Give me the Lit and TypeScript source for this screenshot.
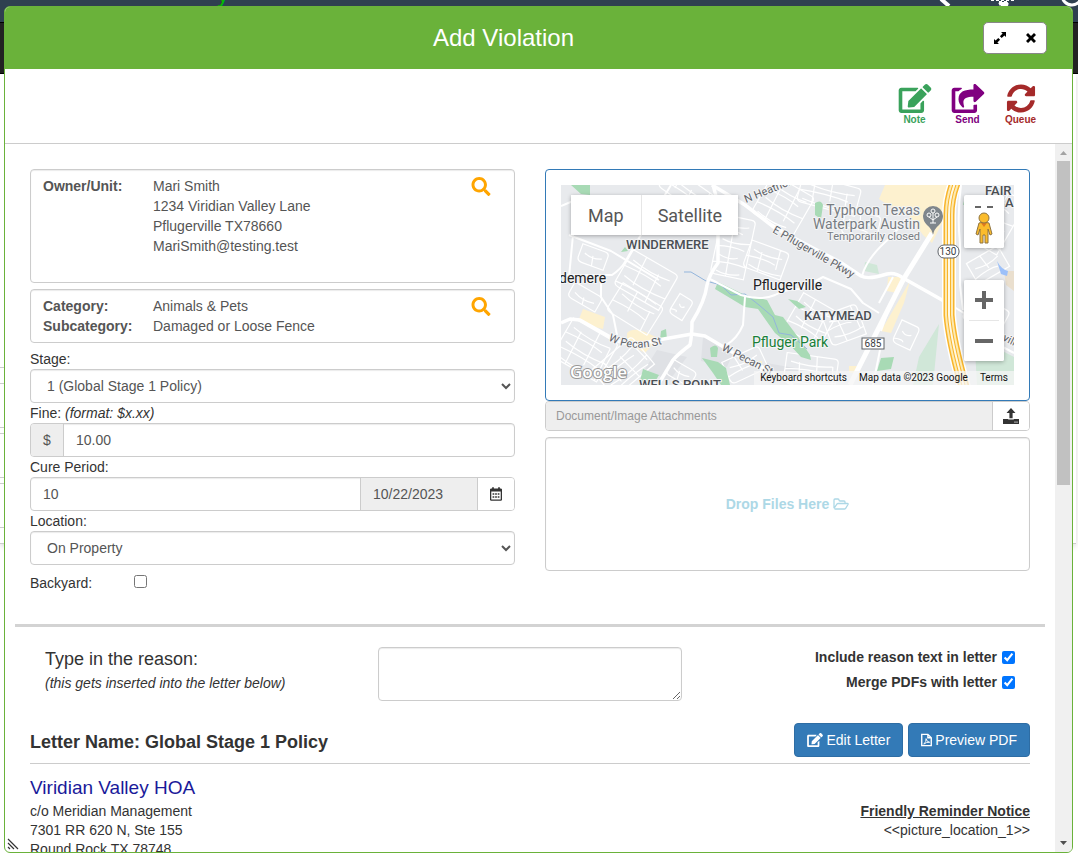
import { LitElement, html, svg, css } from "lit";
import { customElement } from "lit/decorators.js";

const ICONS: Record<string, { box: string; d: string }> = {
  edit: {
    box: "0 0 576 512",
    d: "M402.6 83.2l90.2 90.2c3.8 3.8 3.8 10 0 13.8L274.4 405.6l-92.8 10.3c-12.4 1.4-22.9-9.1-21.5-21.5l10.3-92.8L388.800 83.2c3.800-3.800 10-3.800 13.800 0zm162-22.900l-48.800-48.800c-15.200-15.200-39.900-15.200-55.200 0l-35.400 35.400c-3.800 3.800-3.800 10 0 13.800l90.200 90.200c3.800 3.800 10 3.800 13.800 0l35.400-35.400c15.200-15.300 15.200-40 0-55.200zM384 346.200V448H64V128h229.800c3.200 0 6.200-1.300 8.500-3.500l40-40c7.600-7.600 2.200-20.500-8.500-20.500H48C21.500 64 0 85.500 0 112v352c0 26.500 21.500 48 48 48h352c26.500 0 48-21.500 48-48V306.200c0-10.700-12.900-16-20.500-8.500l-40 40c-2.200 2.300-3.500 5.300-3.500 8.500z",
  },
  share: {
    box: "0 0 576 512",
    d: "M568.482 177.448L424.479 313.433C409.300 327.768 384 317.140 384 295.985v-71.963c-144.575.970-205.566 35.113-164.775 171.353 4.483 14.973-12.846 26.567-25.006 17.330C155.252 383.105 120 326.488 120 269.339c0-143.937 117.599-172.500 264-173.312V24.012c0-21.174 25.317-31.768 40.479-17.448l144.003 135.988c10.020 9.463 10.028 25.425 0 34.896zM384 379.128V448H64V128h50.916a11.990 11.990 0 0 0 8.648-3.693c14.953-15.568 32.237-27.890 51.014-37.676C185.708 80.830 181.584 64 169.033 64H48C21.490 64 0 85.490 0 112v352c0 26.510 21.490 48 48 48h352c26.510 0 48-21.490 48-48v-88.806c0-8.288-8.197-14.066-16.011-11.302a71.830 71.830 0 0 1-34.189 3.377c-7.270-1.046-13.800 4.514-13.800 11.859z",
  },
  sync: {
    box: "0 0 512 512",
    d: "M370.720 133.280C339.458 104.008 298.888 87.962 255.848 88c-77.458.068-144.328 53.178-162.791 126.850-1.344 5.363-6.122 9.150-11.651 9.150H24.103c-7.498 0-13.194-6.807-11.807-14.176C33.933 94.924 134.813 8 256 8c66.448 0 126.791 26.136 171.315 68.685L463.030 40.970C478.149 25.851 504 36.559 504 57.941V192c0 13.255-10.745 24-24 24H345.941c-21.382 0-32.090-25.851-16.971-40.971l41.750-41.749zM32 296h134.059c21.382 0 32.090 25.851 16.971 40.971l-41.750 41.750c31.262 29.273 71.835 45.319 114.876 45.280 77.418-.070 144.315-53.144 162.787-126.849 1.344-5.363 6.122-9.150 11.651-9.150h57.304c7.498 0 13.194 6.807 11.807 14.176C478.067 417.076 377.187 504 256 504c-66.448 0-126.791-26.136-171.315-68.685L48.970 471.030C33.851 486.149 8 475.441 8 454.059V320c0-13.255 10.745-24 24-24z",
  },
  search: {
    box: "0 0 512 512",
    d: "M505 442.700L405.300 343c-4.500-4.500-10.600-7-17-7H372c27.600-35.300 44-79.700 44-128C416 93.100 322.900 0 208 0S0 93.100 0 208s93.100 208 208 208c48.300 0 92.700-16.400 128-44v16.300c0 6.400 2.500 12.500 7 17l99.700 99.700c9.400 9.400 24.600 9.400 33.900 0l28.300-28.300c9.400-9.400 9.400-24.600.100-34zM208 336c-70.700 0-128-57.200-128-128 0-70.700 57.200-128 128-128 70.700 0 128 57.200 128 128 0 70.700-57.200 128-128 128z",
  },
  expand: {
    box: "0 0 14 14",
    d: "M8 1h5v5l-1.600-1.600-2.700 2.700-1.800-1.800 2.700-2.700zM6 13H1V8l1.600 1.600 2.700-2.700 1.800 1.800-2.700 2.700z",
  },
  close: {
    box: "0 0 12 12",
    d: "M3 1L6 4 9 1 11 3 8 6 11 9 9 11 6 8 3 11 1 9 4 6 1 3z",
  },
  upload: {
    box: "0 0 16 16",
    d: "M8 0l4.500 5H9.600v5.200H6.400V5H3.500zM0 11h5.200v.6h5.600V11H16v5H0zm11.500 2.600v1.200h1V13.600zm2 0v1.200h1V13.600z",
  },
  calendar: {
    box: "0 0 14 16",
    d: "M2.500 0h2v1.500h5V0h2v1.500H13l1 1V15l-1 1H1l-1-1V2.500l1-1h1.500zM1.500 5v9.500h11V5zM3 7h2v2H3zM6 7h2v2H6zM9 7h2v2H9zM3 10.500h2v2H3zM6 10.500h2v2H6zM9 10.500h2v2H9z",
  },
};

const icon = (name: string, cls: string) => html`
  <svg class=${cls} viewBox=${ICONS[name].box} aria-hidden="true"><path fill="currentColor" fill-rule="evenodd" d=${ICONS[name].d}></path></svg>
`;

// Residential street blocks: centre x, centre y, half width, half height, rotation, spacing.
const BLOCKS: number[][] = [
  [128, 8, 30, 12, 35, 8], [172, 62, 17, 30, 12, 8], [85, 95, 26, 20, 30, 9],
  [32, 72, 14, 9, 20, 8], [74, 124, 24, 16, 32, 10], [120, 122, 8, 11, 32, 9], [24, 165, 26, 22, 30, 8], [62, 182, 26, 18, -40, 8],
  [120, 188, 14, 8, 30, 7], [222, 20, 24, 22, 30, 8], [268, 10, 30, 14, 15, 8], [205, 75, 20, 14, 20, 8],
  [184, 180, 20, 12, -25, 8], [250, 135, 20, 20, 30, 8], [283, 140, 18, 16, -20, 8], [300, 40, 18, 12, 12, 9],
  [250, 185, 26, 14, 8, 8], [435, 35, 18, 30, 30, 9], [427, 80, 18, 12, -30, 9],
  [345, 150, 10, 12, 25, 10], [425, 130, 20, 14, 28, 10], [24, 112, 16, 8, 30, 9],
];

const blockPath = ([, , w, h, , s]: number[]) => {
  let d = `M${-w} ${-h}H${w - 4}Q${w} ${-h} ${w} ${-h + 4}V${h}H${-w + 5}Q${-w} ${h} ${-w} ${h - 5}Z`;
  let i = 0;
  for (let y = -h + s; y < h - 3; y += s) {
    i++;
    d += `M${-w + (i % 2) * 5} ${y}Q0 ${y + (i % 2 ? 4 : -3)} ${w - (i % 3) * 5} ${y}`;
  }
  for (let x = -w + s * 1.7; x < w - 4; x += s * 2.1) {
    i++;
    d += `M${x} ${i % 2 ? -h : -h + s}L${x + 2} ${i % 2 ? h - s : h}`;
  }
  return d;
};

const MAIN_ROADS = [
  "M151 0L184 20L214 43Q250 62 279 77L300 91Q307 95 326 89Q334 87 342 93L390 120",
  "M0 138L9 134L19 135L51 153Q66 163 97 155L131 149L144 151L171 167L211 187L232 200",
  "M152 0Q159 22 157 50V78Q148 90 146 100Q144 116 131 137Q131 150 129 160Q116 170 112 175L97 200",
];
const SIDE_ROADS = [
  "M0 90L51 90Q60 84 64 77L81 48L110 0",
  "M0 21L12 16M8 50L50 66L98 95",
  "M147 93L180 110Q200 116 214 110Q224 104 240 104L262 92L290 104L302 118L318 128",
  "M184 112L182 140Q176 154 165 160",
  "M40 90L40 112L52 130L56 150M12 50L8 92",
  "M301 91Q306 72 330 52L345 34M318 118L332 92",
  "M390 120L406 130L410 145L453 168M400 0Q396 30 399 58V100L402 125",
];
const TOLL_ROAD = "M394 -2Q388 14 388 30V130Q390 156 403 202";

@customElement("map-view")
export class MapView extends LitElement {
  static styles = css`
    :host { display: block; position: relative; height: 200px; overflow: hidden; background: #e8eaed; font-family: Roboto, sans-serif; }
    .canvas { display: block; width: 100%; height: 100%; }
    .road-label { font-size: 11px; fill: #5f6368; }
    .area { font-size: 13px; font-weight: 500; fill: #4b4f54; }
    .town { font-size: 14px; fill: #202124; }
    .park { font-size: 14px; fill: #188038; }
    .poi { font-size: 14px; fill: #777c82; text-anchor: end; }
    .poi-note { font-size: 11px; fill: #777c82; text-anchor: end; }
    .route { font-size: 10px; fill: #3c4043; text-anchor: middle; }
    .halo { paint-order: stroke; stroke: #f4f5f6; stroke-width: 2px; stroke-linejoin: round; }
    .logo { font-family: "Open Sans", sans-serif; font-size: 17px; font-weight: 600; fill: #fff; stroke: #999; stroke-width: 2px; paint-order: stroke; }
    .types { position: absolute; left: 10px; top: 10px; display: flex; box-shadow: 0 1px 4px rgba(0, 0, 0, 0.3); }
    button { border: 0; margin: 0; padding: 0; background: #fff; color: #565656; font-family: inherit; }
    .type { height: 40px; padding: 0 17px; font-size: 18px; }
    .type + .type { border-left: 1px solid #e6e6e6; padding: 0 16px; }
    .tools { position: absolute; right: 10px; top: 10px; width: 40px; display: flex; flex-direction: column; gap: 32px; }
    .stack { display: flex; flex-direction: column; border-radius: 2px; background: #fff; box-shadow: 0 1px 4px rgba(0, 0, 0, 0.3); overflow: hidden; }
    .tilt { height: 13px; display: flex; align-items: flex-end; justify-content: center; gap: 6px; }
    .dash { width: 6px; height: 2px; background: #666; }
    .tool { height: 40px; display: flex; align-items: center; justify-content: center; }
    .rule { height: 1px; margin: 0 5px; background: #e6e6e6; }
    .pegman { width: 18px; height: 32px; }
    .glyph { width: 18px; height: 18px; }
    .credits { position: absolute; right: 0; bottom: 0; height: 14px; display: flex; align-items: center; }
    .credit { background: rgba(245, 245, 245, 0.75); padding: 0 6px; line-height: 14px; color: #111; text-decoration: none; font-size: 10px; }
  `;

  render() {
    return html`
      <svg class="canvas" viewBox="0 0 453 200" preserveAspectRatio="xMidYMid slice" role="img" aria-label="Map of Pflugerville">
        <g fill="#dfe1e5">
          <path d="M142 152L172 168L166 182L140 176zM96 165L126 172L108 196L84 184zM205 178L240 184L230 200H200z"></path>
        </g>
        <g fill="#fdf1cf">
          <path d="M324 0H390L382 36L371 58L362 50L346 28L330 22L318 14zM22 124L44 132L42 144L34 142L18 134zM66 148Q72 142 84 147L97 153L84 168L66 158zM327 92L340 92L336 108L326 106zM349 96L343 118L330 148L320 146zM288 181H296V188H288zM194 176H201V182H194z"></path>
        </g>
        <g fill="none" stroke="#fff" stroke-width="1.200">
          ${BLOCKS.map((b) => svg`<path transform="translate(${b[0]} ${b[1]}) rotate(${b[4]})" d=${blockPath(b)}></path>`)}
        </g>
        <g fill="#a8dab5">
          <path d="M10 0H29V10L20 9zM60 67L64 62L67 66zM157 97L184 110L206 115L214 130L222 132L237 152L249 170L250 175L240 172L229 160L214 148L197 124L184 122L154 104zM100 146L105 144L106 154H99zM149 163Q155 158 157 163L156 172L150 172zM141 173L157 177L165 183L169 200H160L152 188zM82 184L98 190L92 200H78zM254 18Q260 14 262 20L260 34L254 30zM320 173L333 172L330 184L316 186zM227 114L236 116L245 122L238 124zM404 12L410 18L402 20z"></path>
        </g>
        <g fill="#d0e7d8">
          <path d="M378 139L372 200H352L358 172zM414 165L426 158L453 172V200H416zM304 77L316 80L318 89L303 86z"></path>
        </g>
        <path d="M443 86H453V106L445 100z" fill="#eadfce"></path>
        <path d="M436 76Q440 84 447 86L446 91L440 89z" fill="#9cc0f9"></path>
        <path d="M123 87L130 87L145 96L160 100L170 110L184 109L198 120L212 132L218 148L230 150L246 164" fill="none" stroke="#93b5dc" stroke-width="1"></path>
        <g fill="none" stroke="#fff" stroke-width="2" stroke-linejoin="round">
          ${SIDE_ROADS.map((d) => svg`<path d=${d}></path>`)}
        </g>
        <g fill="none" stroke="#fff" stroke-width="3.500" stroke-linejoin="round">
          ${MAIN_ROADS.map((d) => svg`<path d=${d}></path>`)}
        </g>
        <path d="M371 48L342 95L289 200" fill="none" stroke="#fff" stroke-width="5"></path>
        <path d="M330 118L320 146M319 165L312 200" fill="none" stroke="#fff" stroke-width="2"></path>
        <g fill="none">
          <path d=${TOLL_ROAD} stroke="#fff" stroke-width="14"></path>
          <path d=${TOLL_ROAD} stroke="#f8b52c" stroke-width="11"></path>
          <path d=${TOLL_ROAD} stroke="#fdeab2" stroke-width="8"></path>
          <path d=${TOLL_ROAD} stroke="#f8b52c" stroke-width="4"></path>
          <path d=${TOLL_ROAD} stroke="#fff8e2" stroke-width="2"></path>
        </g>
        <path id="pecan" d="M47 155Q70 168 102 159" fill="none"></path>

        <text class="area halo" x="65" y="64">WINDERMERE</text>
        <text class="town halo" x="-2" y="98">demere</text>
        <text class="town halo" x="192" y="105">Pflugerville</text>
        <text class="area halo" x="243" y="135">KATYMEAD</text>
        <text class="park halo" x="191" y="162">Pfluger Park</text>
        <text class="area halo" x="78" y="204">WELLS POINT</text>
        <text class="area halo" x="424" y="10">FAIR</text>
        <text class="area halo" x="444" y="22">A</text>
        <text class="poi halo" x="359" y="30">Typhoon Texas</text>
        <text class="poi halo" x="359" y="44">Waterpark Austin</text>
        <text class="poi-note halo" x="359" y="55">Temporarily closed</text>
        <text class="road-label halo"><textPath href="#pecan">W Pecan St</textPath></text>
        <text class="road-label halo" transform="translate(160 165) rotate(27)">W Pecan St</text>
        <text class="road-label halo" transform="translate(211 47) rotate(30)">E Pflugerville Pkwy</text>
        <text class="road-label halo" transform="translate(185 18) rotate(-22)">N Heather</text>
        <text class="road-label halo" transform="translate(441 155) rotate(27)">ville</text>

        <path d="M372 50Q371 44 366 40Q362 36 362 31A10 10 0 0 1 382 31Q382 36 378 40Q373 44 372 50z" fill="#7f868c"></path>
        <g fill="none" stroke="#fff" stroke-width="1">
          <path d="M372 38V28M369 38H375M372 35L368 32M372 35L376 32"></path>
          <circle cx="372" cy="26" r="2"></circle><circle cx="368" cy="30" r="2"></circle><circle cx="376" cy="30" r="2"></circle>
        </g>
        <rect x="377" y="60" width="21" height="13" rx="6" fill="#fff" stroke="#5f6368"></rect>
        <text class="route" x="387" y="70">130</text>
        <rect x="301" y="153" width="22" height="11" fill="#fff" stroke="#5f6368"></rect>
        <text class="route" x="312" y="162">685</text>
        <text class="logo" x="9" y="193">Google</text>
      </svg>

      <div class="types">
        <button class="type">Map</button>
        <button class="type">Satellite</button>
      </div>
      <div class="tools">
        <div class="stack">
          <div class="tilt"><span class="dash"></span><span class="dash"></span></div>
          <button class="tool" aria-label="Street View">
            <svg class="pegman" viewBox="0 0 18 32" aria-hidden="true">
              <path d="M4 11Q9 9 14 11L17 22L15 23L13 17V31H10V23H8V31H5V17L3 23L1 22z" fill="#fbbc2c" stroke="#8f7440"></path>
              <path d="M6 11H12L9 15z" fill="#e07a1f"></path>
              <circle cx="9" cy="6" r="5" fill="#fbbc2c" stroke="#8f7440"></circle>
            </svg>
          </button>
        </div>
        <div class="stack">
          <button class="tool" aria-label="Zoom in">
            <svg class="glyph" viewBox="0 0 18 18" aria-hidden="true"><path d="M7 0h4v7h7v4h-7v7H7v-7H0V7h7z" fill="#666"></path></svg>
          </button>
          <div class="rule"></div>
          <button class="tool" aria-label="Zoom out">
            <svg class="glyph" viewBox="0 0 18 18" aria-hidden="true"><path d="M0 7h18v4H0z" fill="#666"></path></svg>
          </button>
        </div>
      </div>
      <div class="credits">
        <button class="credit">Keyboard shortcuts</button>
        <span class="credit">Map data ©2023 Google</span>
        <a class="credit" href="#">Terms</a>
      </div>
    `;
  }
}

@customElement("app-root")
export class AppRoot extends LitElement {
  static styles = css`
    :host { display: block; position: relative; height: 100vh; overflow: hidden; background: #fff; font-family: "Liberation Sans", Arial, sans-serif; font-size: 14px; line-height: 20px; color: #333; }
    * { box-sizing: border-box; }
    button, input, select, textarea { font: inherit; color: inherit; margin: 0; }
    button { cursor: pointer; }

    .navbar { height: 23px; background: #2f4050; border-bottom: 1px solid #000; display: flex; justify-content: space-between; overflow: hidden; }
    .brand { margin: -6px 0 0 217px; height: 5px; line-height: 0; font-size: 24px; color: #0b0; }
    .nav-icons { width: 140px; height: 8px; }
    .subnav { height: 51px; background: #222; border-bottom: 1px solid #000; }
    .page-card { display: flex; flex-direction: column; gap: 5px; margin-right: 2px; padding-bottom: 15px; border-bottom: 1px solid #ccc; box-shadow: 0 2px 6px rgba(0, 0, 0, 0.15); }
    .page-top { height: 294px; width: 50%; border-bottom: 1px solid #ccc; margin-bottom: 10px; }
    .page-row { height: 45px; width: 50%; border: 1px solid #ccc; border-left: 0; }

    .dialog { position: absolute; inset: 6px 5px 8px 4px; display: flex; flex-direction: column; background: #fff; border: 1px solid #6ab23a; border-radius: 6px; overflow: hidden; }
    .header { flex: none; height: 62px; padding: 0 25px 0 19px; display: flex; align-items: center; background: #6ab23a; }
    .title { flex: 1; margin: 0; text-align: center; font-size: 24px; line-height: 32px; font-weight: normal; color: #fff; }
    .window-buttons { display: flex; height: 32px; background: #fff; border: 1px solid #888; border-radius: 5px; }
    .window-button { width: 31px; padding: 0; border: 0; background: none; color: #000; display: flex; align-items: center; justify-content: center; }
    .icon-expand { width: 14px; height: 14px; }
    .icon-close { width: 12px; height: 12px; }

    .toolbar { flex: none; height: 75px; padding: 15px 25px 0; display: flex; justify-content: flex-end; border-bottom: 1px solid #ccc; }
    .action { width: 53px; height: 42px; padding: 0; border: 0; background: none; display: flex; flex-direction: column; align-items: center; gap: 1px; font-size: 10px; line-height: 12px; font-weight: bold; }
    .note { color: #3aa25b; }
    .send { color: purple; }
    .queue { color: #a52a2a; }
    .icon-action { height: 30px; width: 34px; }

    .viewport { flex: 1; min-height: 0; display: flex; }
    .content { flex: 1; min-width: 0; overflow: hidden; padding: 25px 10px 0; }
    .scrollbar { flex: none; width: 17px; background: #f0f0f0; display: flex; flex-direction: column; align-items: center; }
    .arrow { flex: none; width: 17px; height: 17px; }
    .track { flex: 1; align-self: stretch; padding: 0 2px; }
    .thumb { height: 48%; background: #c1c1c1; }

    .columns { display: grid; grid-template-columns: 1fr 1fr; gap: 30px; padding: 0 15px 31px; }
    .column { display: flex; flex-direction: column; min-width: 0; }
    .panel { display: flex; align-items: flex-start; padding: 6px 23px 6px 12px; margin-bottom: 6px; border: 1px solid #ccc; border-radius: 4px; box-shadow: inset 0 1px 1px rgba(0, 0, 0, 0.08); color: #555; }
    .owner { min-height: 114px; }
    .facts { flex: 1; display: grid; grid-template-columns: 110px 1fr; margin: 0; }
    .facts dt { font-weight: bold; }
    .facts dd { margin: 0; }
    .search { height: 20px; padding: 0; border: 0; background: none; color: orange; }
    .icon-search { display: block; width: 20px; height: 19px; }

    .control { width: 100%; height: 34px; padding: 6px 12px; border: 1px solid #ccc; border-radius: 4px; background: #fff; box-shadow: inset 0 1px 1px rgba(0, 0, 0, 0.08); color: #555; outline: none; }
    .group { display: flex; border: 1px solid #ccc; border-radius: 4px; height: 34px; overflow: hidden; box-shadow: inset 0 1px 1px rgba(0, 0, 0, 0.08); }
    .group .control { flex: 1; min-width: 0; height: 32px; border: 0; border-radius: 0; background: none; box-shadow: none; }
    .addon { flex: none; width: 33px; display: flex; align-items: center; justify-content: center; background: #eee; border-right: 1px solid #ccc; color: #555; }
    .group .date { flex: none; width: 117px; background: #eee; border-left: 1px solid #ccc; }
    .icon-button { flex: none; width: 37px; padding: 0; border: 0; border-left: 1px solid #ccc; background: #fff; display: flex; align-items: center; justify-content: center; }
    .icon-calendar { width: 12px; height: 14px; }
    .icon-upload { width: 16px; height: 16px; }
    .backyard { display: flex; align-items: flex-start; padding-top: 8px; }
    .backyard label { width: 104px; }
    input[type="checkbox"] { width: 13px; height: 13px; }
    .backyard input { margin-top: 2px; }

    .map-panel { padding: 15px; border: 1px solid #337ab7; border-radius: 4px; }
    .attachments { height: 30px; margin-bottom: 6px; }
    .group .attach-name { height: 28px; padding: 4px 10px; font-size: 12px; background: #eee; }
    .attach-name::placeholder { color: #999; opacity: 1; }
    .drop { height: 134px; display: flex; align-items: center; justify-content: center; gap: 4px; border: 1px solid #ccc; border-radius: 4px; box-shadow: inset 0 1px 1px rgba(0, 0, 0, 0.08); color: #add8e6; font-weight: bold; }
    .icon-folder { width: 16px; height: 12px; }

    .divider { height: 3px; margin: 0; border: 0; background: #d3d3d3; }
    .reason { display: grid; grid-template-columns: 1fr 1fr 1fr; padding: 20px 15px 22px; }
    .cell { padding: 0 15px; display: flex; flex-direction: column; }
    .reason-label { font-size: 18px; line-height: 24px; margin-bottom: 2px; }
    .reason .control { display: block; height: 54px; }
    .options { align-items: flex-end; gap: 5px; font-weight: bold; }
    .option { display: flex; align-items: center; gap: 5px; }

    .letter-head { display: flex; align-items: center; gap: 5px; margin: 0 15px; padding-bottom: 6px; border-bottom: 1px solid #ccc; }
    .letter-name { flex: 1; margin: 0; padding-top: 4px; font-size: 18px; line-height: 24px; }
    .primary { height: 34px; padding: 0 12px; display: flex; align-items: center; gap: 3px; border: 1px solid #2e6da4; border-radius: 4px; background: #337ab7; color: #fff; }
    .icon-edit { width: 16px; height: 14px; }
    .icon-pdf { width: 11px; height: 14px; }
    .letter { display: flex; justify-content: space-between; align-items: flex-start; padding: 10px 15px 0; line-height: 19px; }
    .hoa { margin: 0; font-size: 19px; line-height: 28px; font-weight: normal; color: #1a1a9a; }
    .address, .notice { margin: 0; }
    .notice { padding-top: 28px; text-align: right; }
    .notice-title { font-weight: bold; text-decoration: underline; }
    .grip { position: absolute; left: 2px; bottom: 2px; width: 12px; height: 12px; }
  `;

  render() {
    return html`
      <div class="navbar" aria-hidden="true">
        <div class="brand">y</div>
        <svg class="nav-icons" viewBox="0 0 140 8">
          <path d="M3 -1L11 6" stroke="#fff" stroke-width="4"></path>
          <path d="M53 0H77M61 2H70L69 6H63z" stroke="#fff" stroke-width="2" stroke-dasharray="3 2" fill="#fff"></path>
          <circle cx="134" cy="-5" r="10" fill="none" stroke="#fff" stroke-width="3"></circle>
        </svg>
      </div>
      <div class="subnav"></div>
      <div class="page-card">
        <div class="page-top"></div>
        <div class="page-row"></div>
        <div class="page-row"></div>
        <div class="page-row"></div>
      </div>

      <section class="dialog" role="dialog" aria-labelledby="title">
        <header class="header">
          <h1 class="title" id="title">Add Violation</h1>
          <div class="window-buttons">
            <button class="window-button" aria-label="Expand">${icon("expand", "icon-expand")}</button>
            <button class="window-button" aria-label="Close">${icon("close", "icon-close")}</button>
          </div>
        </header>
        <div class="toolbar">
          <button class="action note">${icon("edit", "icon-action")}Note</button>
          <button class="action send">${icon("share", "icon-action")}Send</button>
          <button class="action queue">${icon("sync", "icon-action")}Queue</button>
        </div>
        <div class="viewport">
          <div class="content">
            <div class="columns">
              <div class="column">
                <div class="panel owner">
                  <dl class="facts">
                    <dt>Owner/Unit:</dt>
                    <dd>Mari Smith<br />1234 Viridian Valley Lane<br />Pflugerville TX78660<br />MariSmith@testing.test</dd>
                  </dl>
                  <button class="search" aria-label="Find owner">${icon("search", "icon-search")}</button>
                </div>
                <div class="panel">
                  <dl class="facts">
                    <dt>Category:</dt><dd>Animals &amp; Pets</dd>
                    <dt>Subcategory:</dt><dd>Damaged or Loose Fence</dd>
                  </dl>
                  <button class="search" aria-label="Find category">${icon("search", "icon-search")}</button>
                </div>
                <label for="stage">Stage:</label>
                <select class="control" id="stage"><option>1 (Global Stage 1 Policy)</option></select>
                <label for="fine">Fine: <i>(format: $x.xx)</i></label>
                <div class="group">
                  <span class="addon">$</span>
                  <input class="control" id="fine" .value=${"10.00"} />
                </div>
                <label for="cure">Cure Period:</label>
                <div class="group">
                  <input class="control" id="cure" .value=${"10"} />
                  <input class="control date" aria-label="Cure date" readonly .value=${"10/22/2023"} />
                  <button class="icon-button" aria-label="Pick date">${icon("calendar", "icon-calendar")}</button>
                </div>
                <label for="location">Location:</label>
                <select class="control" id="location"><option>On Property</option></select>
                <div class="backyard">
                  <label for="backyard">Backyard:</label>
                  <input type="checkbox" id="backyard" />
                </div>
              </div>
              <div class="column">
                <div class="map-panel"><map-view></map-view></div>
                <div class="group attachments">
                  <input class="control attach-name" aria-label="Attachments" readonly placeholder="Document/Image Attachments" />
                  <button class="icon-button" aria-label="Upload">${icon("upload", "icon-upload")}</button>
                </div>
                <div class="drop">
                  Drop Files Here
                  <svg class="icon-folder" viewBox="0 0 16 12" aria-hidden="true">
                    <path d="M1 10V2Q1 1 2 1H5Q6 1 6 2Q6 3 7 3H11Q12 3 12 4V5.500M1 10.500L4 6Q4.500 5.500 5 5.500H14.500Q15.500 5.500 15 6.500L12.500 10.500Q12 11 11.500 11H1.500" fill="none" stroke="currentColor" stroke-width="1.300"></path>
                  </svg>
                </div>
              </div>
            </div>
            <hr class="divider" />
            <div class="reason">
              <div class="cell">
                <label class="reason-label" for="reason">Type in the reason:</label>
                <i>(this gets inserted into the letter below)</i>
              </div>
              <div class="cell"><textarea class="control" id="reason"></textarea></div>
              <div class="cell options">
                <label class="option">Include reason text in letter <input type="checkbox" checked /></label>
                <label class="option">Merge PDFs with letter <input type="checkbox" checked /></label>
              </div>
            </div>
            <div class="letter-head">
              <h2 class="letter-name">Letter Name: Global Stage 1 Policy</h2>
              <button class="primary">${icon("edit", "icon-edit")}Edit Letter</button>
              <button class="primary">
                <svg class="icon-pdf" viewBox="0 0 12 14" aria-hidden="true">
                  <path d="M.8 .8H7.500L11.200 4.500V13.200H.8zM7.500 .8V4.500H11.200" fill="none" stroke="currentColor" stroke-width="1.500"></path>
                  <path d="M3 11.500Q6 9 5.500 5.500Q6 9 9.500 9.500Q6 9 3 11.500" fill="none" stroke="currentColor"></path>
                </svg>Preview PDF
              </button>
            </div>
            <div class="letter">
              <div>
                <h3 class="hoa">Viridian Valley HOA</h3>
                <p class="address">c/o Meridian Management<br />7301 RR 620 N, Ste 155<br />Round Rock TX 78748</p>
              </div>
              <p class="notice"><span class="notice-title">Friendly Reminder Notice</span><br />&lt;&lt;picture_location_1&gt;&gt;</p>
            </div>
          </div>
          <div class="scrollbar" aria-hidden="true">
            <svg class="arrow" viewBox="0 0 17 17"><path d="M5 11L8.500 7L12 11z" fill="#a3a3a3"></path></svg>
            <div class="track"><div class="thumb"></div></div>
            <svg class="arrow" viewBox="0 0 17 17"><path d="M5 6L8.500 10L12 6z" fill="#505050"></path></svg>
          </div>
        </div>
        <svg class="grip" viewBox="0 0 12 12" aria-hidden="true"><path d="M1 1L11 11M1 5L7 11M1 9L3 11" stroke="#333" stroke-width="1.200"></path></svg>
      </section>
    `;
  }
}
